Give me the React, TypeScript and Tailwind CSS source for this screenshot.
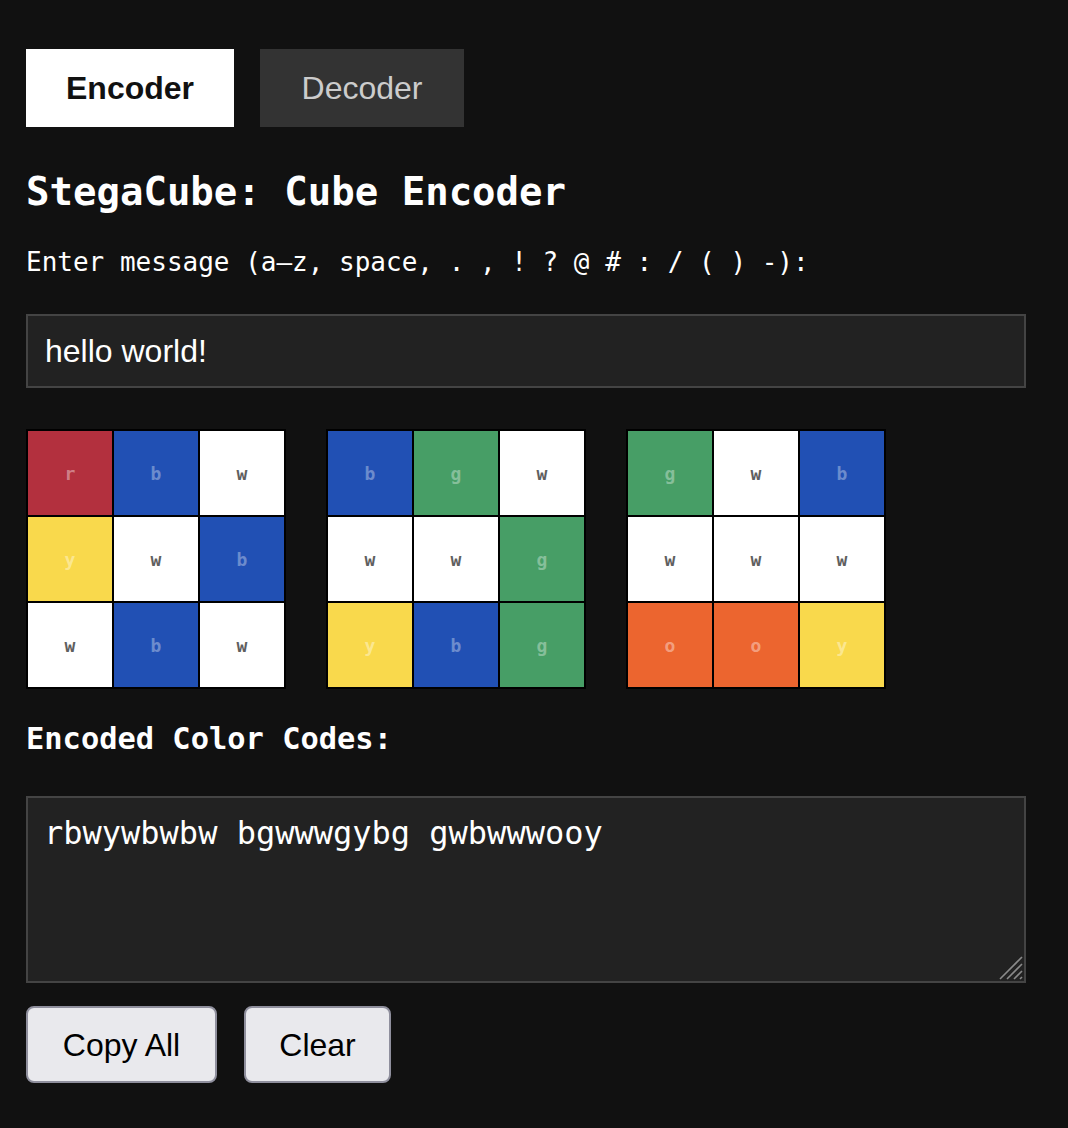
import React from "react";

const COLORS: Record<string, string> = {
  r: "bg-[#b3303e] text-white/40",
  b: "bg-[#2150b4] text-white/35",
  w: "bg-white text-[#5f5f5f]",
  y: "bg-[#f9d94c] text-white/40",
  g: "bg-[#479e66] text-white/35",
  o: "bg-[#ec652f] text-white/40",
};

const codes = ["rbwywbwbw", "bgwwwgybg", "gwbwwwooy"];

function Cube({ code }: { code: string }) {
  return (
    <div className="grid w-[260px] grid-cols-[84px_84px_84px] gap-[2px] bg-black p-[2px]">
      {code.split("").map((c, i) => (
        <div
          key={i}
          className={`flex h-[84px] items-center justify-center font-['DejaVu_Sans_Mono',monospace] text-[18px] font-bold ${COLORS[c]}`}
        >
          {c}
        </div>
      ))}
    </div>
  );
}

export default function App() {
  return (
    <div className="min-h-[1128px] w-[1068px] bg-[#111111] pl-[26px] pt-[49px] font-['DejaVu_Sans_Mono',monospace] text-white">
      <div className="flex w-[1000px] flex-col">
        <div className="flex gap-[26px] font-['Liberation_Sans',Arial,sans-serif]">
          <button className="h-[78px] w-[208px] bg-white text-[32px] font-bold text-[#111111]">
            Encoder
          </button>
          <button className="h-[78px] w-[204px] bg-[#333333] text-[32px] text-[#cccccc]">
            Decoder
          </button>
        </div>

        <h2 className="mt-[45px] text-[39px] font-bold leading-none">StegaCube: Cube Encoder</h2>

        <label className="mt-[38px] text-[26px] leading-none">
          Enter message (a–z, space, . , ! ? @ # : / ( ) -):
        </label>

        <input
          readOnly
          value="hello world!"
          className="mt-[39px] h-[74px] w-[1000px] border-2 border-[#444444] bg-[#222222] px-[17px] font-['Liberation_Sans',Arial,sans-serif] text-[32px] text-white outline-none"
        />

        <div className="mt-[41px] flex gap-[40px]">
          {codes.map((c) => (
            <Cube key={c} code={c} />
          ))}
        </div>

        <h3 className="mt-[35px] text-[30.4px] font-bold leading-none">Encoded Color Codes:</h3>

        <div className="relative mt-[42px] h-[187px] w-[1000px]">
          <textarea
            readOnly
            value={codes.join(" ")}
            className="block h-full w-full resize-none border-2 border-[#444444] bg-[#222222] px-[16px] pt-[11px] font-['DejaVu_Sans_Mono',monospace] text-[32px] text-white outline-none"
          />
          <svg className="absolute bottom-[3px] right-[3px]" width="24" height="24" viewBox="0 0 24 24">
            <g stroke="#8a8a8a" strokeWidth="1.6">
              <line x1="1" y1="23" x2="23" y2="1" />
              <line x1="8" y1="23" x2="23" y2="8" />
              <line x1="15" y1="23" x2="23" y2="15" />
              <line x1="21" y1="23" x2="23" y2="21" />
            </g>
          </svg>
        </div>

        <div className="mt-[23px] flex gap-[27px] font-['Liberation_Sans',Arial,sans-serif]">
          <button className="h-[77px] w-[191px] rounded-[8px] border-2 border-[#8f8f9d] bg-[#e9e9ed] text-[32px] text-black">
            Copy All
          </button>
          <button className="h-[77px] w-[147px] rounded-[8px] border-2 border-[#8f8f9d] bg-[#e9e9ed] text-[32px] text-black">
            Clear
          </button>
        </div>
      </div>
    </div>
  );
}
